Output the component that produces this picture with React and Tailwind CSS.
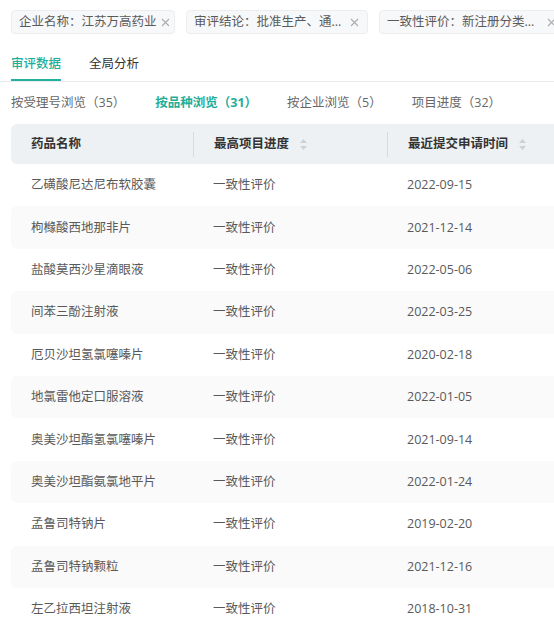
import React from 'react'

const TEAL = 'text-[#1fae9b]'

const tags = [
  { label: '企业名称：江苏万高药业', w: 'w-[164px]' },
  { label: '审评结论：批准生产、通...', w: 'w-[182px]' },
  { label: '一致性评价：新注册分类...', w: 'w-[186px]' },
]

const subTabs = [
  { label: '按受理号浏览（35）' },
  { label: '按品种浏览（31）', active: true },
  { label: '按企业浏览（5）' },
  { label: '项目进度（32）' },
]

const rows = [
  ['乙磺酸尼达尼布软胶囊', '2022-09-15'],
  ['枸橼酸西地那非片', '2021-12-14'],
  ['盐酸莫西沙星滴眼液', '2022-05-06'],
  ['间苯三酚注射液', '2022-03-25'],
  ['厄贝沙坦氢氯噻嗪片', '2020-02-18'],
  ['地氯雷他定口服溶液', '2022-01-05'],
  ['奥美沙坦酯氢氯噻嗪片', '2021-09-14'],
  ['奥美沙坦酯氨氯地平片', '2022-01-24'],
  ['孟鲁司特钠片', '2019-02-20'],
  ['孟鲁司特钠颗粒', '2021-12-16'],
  ['左乙拉西坦注射液', '2018-10-31'],
]

function CloseIcon() {
  return (
    <svg width="9" height="9" viewBox="0 0 9 9" className="shrink-0 ml-[4px]">
      <path d="M1 1L8 8M8 1L1 8" stroke="#a8abb0" strokeWidth="1.1" />
    </svg>
  )
}

function SortIcon() {
  return (
    <svg width="9" height="13" viewBox="0 0 9 13" className="ml-[10px] shrink-0">
      <path d="M4.5 1L8 5H1Z" fill="#cdd0d4" />
      <path d="M4.5 12L8 8H1Z" fill="#cdd0d4" />
    </svg>
  )
}

export default function App() {
  return (
    <div className="w-[554px] h-[618px] overflow-hidden bg-white text-[12.5px] font-['Open_Sans','Noto_Sans_CJK_SC',sans-serif]">
      {/* filter tags */}
      <div className="flex gap-[11px] pl-[11px] pt-[10px] whitespace-nowrap">
        {tags.map(t => (
          <div
            key={t.label}
            className={`${t.w} shrink-0 h-6 flex items-center justify-between pl-[7px] pr-[8px] rounded-[4px] border border-[#ebedef] bg-[#f7f8f9] text-[#5a5a5a]`}
          >
            <span className="pt-px">{t.label}</span>
            <CloseIcon />
          </div>
        ))}
      </div>

      {/* main tabs */}
      <div className="mt-[12px] flex gap-[28px] px-[11px] border-b border-[#e9eaec]">
        <div className={`pt-[8px] pb-[5px] border-b-2 border-[#22b0a0] leading-5 font-medium ${TEAL}`}>审评数据</div>
        <div className="pt-[8px] pb-[5px] border-b-2 border-transparent leading-5 text-[#333]">全局分析</div>
      </div>

      {/* sub tabs */}
      <div className="flex gap-[30px] px-[11px] pt-[11px] leading-5 whitespace-nowrap">
        {subTabs.map(s => (
          <div key={s.label} className={s.active ? `font-bold ${TEAL}` : 'text-[#666]'}>
            {s.label}
          </div>
        ))}
      </div>

      {/* table */}
      <div className="mt-[11px] ml-[11px] w-[600px]">
        <div className="h-10 flex items-center rounded-[6px] bg-[#eef1f3] font-bold text-[#333]">
          <div className="w-[182px] pl-5">药品名称</div>
          <div className="w-[194px] h-[25px] flex items-center pl-5 border-l border-[#d8dbde]">
            最高项目进度<SortIcon />
          </div>
          <div className="flex-1 h-[25px] flex items-center pl-5 border-l border-[#d8dbde]">
            最近提交申请时间<SortIcon />
          </div>
        </div>
        {rows.map(([name, date], i) => (
          <div
            key={name}
            className={`h-[42.4px] flex items-center pt-px rounded-[6px] text-[#595959] ${i % 2 === 1 ? 'bg-[#fafafa]' : ''}`}
          >
            <div className="w-[182px] pl-5">{name}</div>
            <div className="w-[194px] pl-[20px]">一致性评价</div>
            <div className="flex-1 pl-[20px]">{date}</div>
          </div>
        ))}
      </div>
    </div>
  )
}
